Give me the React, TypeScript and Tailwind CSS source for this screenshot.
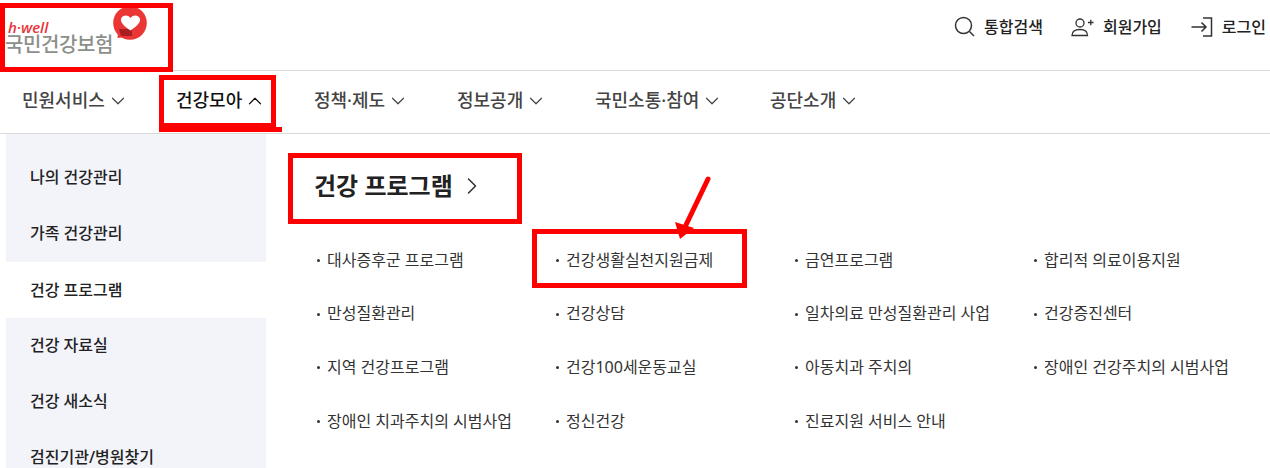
import { ChevronDown, ChevronUp, ChevronRight } from 'lucide-react';

const navItems = [
  { label: '민원서비스', width: 'w-[154px]' },
  { label: '건강모아', open: true, width: 'w-[138px]' },
  { label: '정책·제도', width: 'w-[143px]' },
  { label: '정보공개', width: 'w-[138px]' },
  { label: '국민소통·참여', width: 'w-[175px]' },
  { label: '공단소개', width: 'w-[110px]' },
];

const sideItems = ['나의 건강관리', '가족 건강관리', '건강 프로그램', '건강 자료실', '건강 새소식', '검진기관/병원찾기'];

const links = [
  '대사증후군 프로그램', '건강생활실천지원금제', '금연프로그램', '합리적 의료이용지원',
  '만성질환관리', '건강상담', '일차의료 만성질환관리 사업', '건강증진센터',
  '지역 건강프로그램', '건강100세운동교실', '아동치과 주치의', '장애인 건강주치의 시범사업',
  '장애인 치과주치의 시범사업', '정신건강', '진료지원 서비스 안내',
];

function Logo() {
  return (
    <div className="relative w-[150px] h-[70px] shrink-0">
      <div className="absolute left-[8px] top-[20px] text-[15px] leading-[15px] font-semibold italic text-[#e8343a] font-['Open_Sans',sans-serif]">h·well</div>
      <div className="absolute left-[5px] top-[35px] text-[20px] leading-[20px] tracking-[-0.4px] font-medium text-[#8c8f8a]">국민건강보험</div>
      <svg className="absolute left-[112px] top-[6px]" width="36" height="36" viewBox="0 0 36 36">
        <circle cx="18" cy="17" r="16.800" fill="#ec3535" />
        <path d="M6 27L5.500 32L14 31z" fill="#ec3535" />
        <path d="M7 23h13v7H9z" fill="#a81e22" />
        <path d="M18.500 24.500c-7-4.500-10-8.500-9.500-11.500 0.800-4 6.800-5 9.500-1 2.700-4 8.700-3 9.500 1 0.500 3-2.500 7-9.500 11.500z" fill="#fff" />
      </svg>
    </div>
  );
}

export default function App() {
  return (
    <div className="relative w-[1270px] h-[468px] overflow-hidden bg-white text-[#222] font-['Noto_Sans','Noto_Sans_CJK_KR',sans-serif]">
      <header className="h-[71px] flex items-start justify-between border-b border-[#d9d9d9]">
        <Logo />
        <div className="flex items-center h-[53px] text-[16px] font-medium pr-[4px]">
          <svg className="mr-[9px]" width="21" height="21" viewBox="0 0 21 21" fill="none" stroke="#333" strokeWidth="1.500">
            <circle cx="9.500" cy="9.500" r="8" />
            <path d="M15.500 15.500l4.500 4.500" />
          </svg>
          <span className="mr-[28px]">통합검색</span>
          <svg className="mr-[9px]" width="23" height="20" viewBox="0 0 23 20" fill="none" stroke="#333" strokeWidth="1.300">
            <circle cx="9" cy="6" r="4" />
            <path d="M1 18.500c0-4 3-6 8-6s7.500 2 7.500 6z" />
            <path d="M17 5.500h5.500M19.800 2.800v5.500" />
          </svg>
          <span className="mr-[29px]">회원가입</span>
          <svg className="mr-[9px]" width="22" height="20" viewBox="0 0 22 20" fill="none" stroke="#333" strokeWidth="1.500">
            <path d="M12 1h8.500v18H12" />
            <path d="M0.500 10h14M10.500 5.500l4.500 4.500-4.500 4.500" />
          </svg>
          <span>로그인</span>
        </div>
      </header>

      <nav className="h-[63px] flex items-center pl-[22px] pb-[4px] border-b border-[#d9d9d9] text-[18px] font-medium text-[#444]">
        {navItems.map((item) => (
          <div key={item.label} className={`flex items-center gap-[2px] ${item.width} ${item.open ? 'text-[#111]' : ''}`}>
            <span>{item.label}</span>
            {item.open ? (
              <ChevronUp size={22} strokeWidth={1.3} className="mt-[2px]" />
            ) : (
              <ChevronDown size={22} strokeWidth={1.3} className="mt-[2px]" />
            )}
          </div>
        ))}
      </nav>

      <div className="flex">
        <aside className="ml-[6px] w-[260px] h-[334px] pt-[15px] bg-[#f3f4fa] shrink-0">
          {sideItems.map((item, i) => (
            <div key={item} className={`h-[56px] pl-[24px] pb-[1px] flex items-center text-[16px] font-medium ${i === 2 ? 'bg-white mt-px -mb-px' : ''}`}>
              {item}
            </div>
          ))}
        </aside>

        <main className="flex-1 pl-[48px]">
          <div className="h-[99px] flex items-center gap-[5px] text-[24px] font-bold pt-[4px]">
            <span>건강 프로그램</span>
            <ChevronRight size={28} strokeWidth={1.3} className="text-[#333]" />
          </div>
          <div className="grid grid-cols-[239px_239px_239px_239px] auto-rows-[53.700px] text-[16px] text-[#333]">
            {links.map((link) => (
              <div key={link} className="flex items-center h-[53px]">
                <span className="w-[3px] h-[3px] rounded-full bg-[#333] ml-[3px] mr-[7px] mt-[2px]" />
                <span>{link}</span>
              </div>
            ))}
          </div>
        </main>
      </div>

      {/* red annotations drawn on top of the capture */}
      <div className="absolute left-0 top-[3px] w-[173px] h-[69px] border-[5px] border-[#f00]" />
      <div className="absolute left-[159px] top-[75px] w-[117px] h-[53px] border-[5px] border-[#f00]" />
      <div className="absolute left-[159px] top-[127px] w-[123px] h-[5px] bg-[#f00]" />
      <div className="absolute left-[288px] top-[153px] w-[234px] h-[71px] border-[5px] border-[#f00]" />
      <div className="absolute left-[532px] top-[229px] w-[215px] h-[59px] border-[5px] border-[#f00]" />
      <svg className="absolute left-[670px] top-[172px]" width="46" height="70" viewBox="0 0 46 70" fill="none">
        <path d="M38 7L15 55" stroke="#f00" strokeWidth="5" strokeLinecap="round" />
        <path d="M5 50L24 56L10 67z" fill="#f00" />
      </svg>
    </div>
  );
}
